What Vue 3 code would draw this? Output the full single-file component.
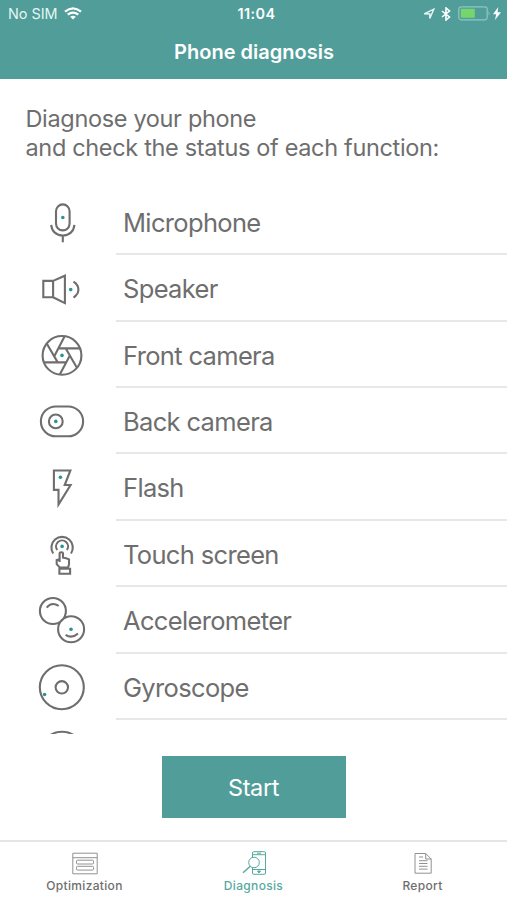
<script setup>
const items = [
  {
    name: 'Microphone',
    paths: ['M56 21.9a6.8 6.8 0 0 1 13.6 0v12.4a6.8 6.8 0 0 1-13.6 0z', 'M51.2 35.6c.5 6.5 5.2 10.6 11.6 10.6S73.9 42.1 74.4 35.6M62.8 46.2v6.8'],
    dot: [62.8, 28.2],
  },
  {
    name: 'Speaker',
    paths: ['M43.3 25.6h9.8v16.3h-9.8zM53.1 25.6l11.8-5.2v27.4l-11.8-5.9', 'M73.5 26.3q4.9 3.2 4.9 8t-4.9 8'],
    dot: [70.7, 34.3],
  },
  {
    name: 'Front camera',
    paths: [
      'M42.6 33.1a19.4 19.4 0 1 0 38.8 0a19.4 19.4 0 1 0-38.8 0',
      'M64.5 14.1L54.3 34M58 26.1h22M65.8 26.1l10.8 18.8M70 32.9l-10.2 19.2M66.3 40.1H44.2M57.7 40.1L46.6 20.9',
    ],
    dot: [62, 33.1],
  },
  {
    name: 'Back camera',
    paths: ['M55.8 18.2h12.4a14.9 14.9 0 0 1 0 29.8H55.8a14.9 14.9 0 0 1 0-29.8z', 'M48.9 33.1a6.9 6.9 0 1 0 13.8 0a6.9 6.9 0 1 0-13.8 0'],
    dot: [55.8, 33.1],
  },
  {
    name: 'Flash',
    paths: ['M53.9 16.2h16.5l-5.7 14.5h5.9L58.5 50.2V35.6h-4.6z'],
    dot: [60.4, 22.9],
  },
  {
    name: 'Touch screen',
    paths: [
      'M53.2 32.2a10.7 10.7 0 1 1 17.8 0M57.2 28.7a6 6 0 1 1 9.7 0',
      'M59.6 40.6V32.3q0-1.4 1.7-1.4t1.7 1.4V36.4l3.2.5 2.8 1.2v5.2l-1 3h-8l-3.3-3.5v-4l2.9-.8',
      'M59.4 47.4h10.7v5.1H59.4z',
    ],
    dot: [62.1, 25.1],
  },
  {
    name: 'Accelerometer',
    paths: [
      'M39.9 23.7a13 13 0 1 0 26 0a13 13 0 1 0-26 0M58.1 41.9a13 13 0 1 0 26 0a13 13 0 1 0-26 0',
      'M46.7 20.3q5-6.2 12-1.7M65.6 47.6q6.4 4 12.4-1.5',
    ],
    dot: [71, 41.9],
  },
  {
    name: 'Gyroscope',
    paths: ['M39.8 33a22 22 0 1 0 44 0a22 22 0 1 0-44 0M55.6 33a6.2 6.2 0 1 0 12.4 0a6.2 6.2 0 1 0-12.4 0'],
    dot: [44.6, 40.2],
  },
]
</script>

<template>
  <div class="screen">
    <header class="top">
      <div class="status">
        <div class="carrier">
          <span>No SIM</span>
          <svg width="18" height="13" viewBox="0 0 18 13" fill="none" stroke="#fff" stroke-width="2.2">
            <path d="M1 4.7q8-6.6 16 0M3.7 7.7q5.3-4.2 10.6 0" />
            <path d="M6.2 9.7q2.8-2 5.6 0L9 12.5z" fill="#fff" stroke="none" />
          </svg>
        </div>
        <div class="clock">11:04</div>
        <div class="indicators">
          <svg class="locate" width="12" height="12" viewBox="0 0 12 12" fill="none" stroke="#e4f6f2" stroke-width="1.4">
            <path d="M1.2 5.8L10.8 1.2 6.8 10.6V6z" />
          </svg>
          <svg class="bluetooth" width="10" height="14" viewBox="0 0 10 14" fill="none" stroke="#fff" stroke-width="1.6">
            <path d="M1 4l7.5 6L5 13V1l3.5 3L1 10" />
          </svg>
          <svg class="battery" width="33" height="15" viewBox="0 0 33 15">
            <rect x=".8" y=".8" width="28.4" height="13" rx="2.5" fill="none" stroke="#91c5c1" stroke-width="1.2" />
            <rect x="2.8" y="2.8" width="14" height="9" rx=".8" fill="#75d66d" />
            <path d="M30.6 5q2 2.3 0 4.6z" fill="#91c5c1" />
          </svg>
          <svg class="charge" width="8" height="13" viewBox="0 0 8 13" fill="#fff">
            <path d="M5.3 0L0 7.3h3.2L2 13l6-7.7H4.5z" />
          </svg>
        </div>
      </div>
      <h1>Phone diagnosis</h1>
    </header>

    <main>
      <p class="intro">
        <span class="line">Diagnose your phone</span>
        <span class="line">and check the status of each function:</span>
      </p>
      <ul class="list">
        <li v-for="item in items" :key="item.name" class="row">
          <svg class="icon" width="116" height="66" viewBox="0 -0.3 116 66">
            <path v-for="d in item.paths" :key="d" :d="d" />
            <circle :cx="item.dot[0]" :cy="item.dot[1]" r="1.8" />
          </svg>
          <div class="label">{{ item.name }}</div>
        </li>
        <li class="partial">
          <svg class="icon" width="116" height="14" viewBox="0 0 116 14">
            <path d="M40 33.7a22 22 0 0 1 44 0" />
          </svg>
        </li>
      </ul>
      <div class="action"><button type="button">Start</button></div>
    </main>

    <nav class="tabs">
      <div class="tab">
        <svg width="26" height="26" viewBox="0 0 26 26" fill="none" stroke="#929292" stroke-width="1">
          <path d="M.8 3.2h24.4v20.6H.8zM.8 7.7h24.4" />
          <rect x="4.5" y="10.2" width="17" height="3.8" rx="1" />
          <rect x="4.5" y="16.3" width="17" height="3.8" rx="1" />
        </svg>
        <span>Optimization</span>
      </div>
      <div class="tab active">
        <svg width="26" height="26" viewBox="0 0 26 26" fill="none" stroke="#57a99f" stroke-width="1">
          <path d="M11.5 7.3V3q0-1.3 1.3-1.3h10.4q1.3 0 1.3 1.3v20q0 1.3-1.3 1.3H12.8q-1.3 0-1.3-1.3v-5.3M11.5 4.7h13M11.5 19.5h13M16 3.2h4" />
          <circle cx="13" cy="12.5" r="5.3" />
          <path d="M9.3 16.2L2 22.7" stroke-width="1.5" />
          <path d="M16.5 21h3L18 23z" fill="#57a99f" />
        </svg>
        <span>Diagnosis</span>
      </div>
      <div class="tab">
        <svg width="26" height="26" viewBox="0 0 26 26" fill="none" stroke="#929292" stroke-width="1">
          <path d="M5 3.5h10.7l5.5 5.5v14.2H5zM15.7 3.5V9h5.5" />
          <path d="M9 7h4M9 10.7h8.5M9 13.5h8.5M9 16.3h8.5M9 19.1h8.5" />
        </svg>
        <span>Report</span>
      </div>
    </nav>
  </div>
</template>

<style>
body {
  margin: 0;
  background: #fff;
}
</style>

<style scoped>
.screen {
  display: flex;
  flex-direction: column;
  width: 507px;
  height: 900px;
  overflow: hidden;
  background: #fff;
  color: #6e6e6e;
  font-family: Inter, "Liberation Sans", sans-serif;
}
.top {
  height: 79px;
  background: #519d9a;
  color: #fff;
}
.status {
  display: grid;
  grid-template-columns: 1fr auto 1fr;
  align-items: center;
  height: 27px;
  padding: 0 6px 0 8px;
}
.carrier {
  display: flex;
  align-items: center;
  gap: 6px;
  font-size: 14.4px;
  color: #e4f6f2;
}
.clock {
  padding-left: 4px;
  font-size: 14.4px;
  font-weight: 600;
  letter-spacing: 0.4px;
}
.indicators {
  display: flex;
  align-items: center;
  justify-content: flex-end;
}
.bluetooth {
  margin-left: 6px;
}
.battery {
  margin-left: 7px;
}
.charge {
  margin-left: 2px;
}
h1 {
  margin: 0;
  padding-left: 1px;
  font-size: 20px;
  font-weight: 600;
  line-height: 51px;
  text-align: center;
}
main {
  flex: 1;
}
.intro {
  height: 84.8px;
  margin: 0;
  padding: 25px 0 0 25.5px;
  box-sizing: content-box;
  font-size: 23.5px;
  line-height: 29px;
  letter-spacing: -0.34px;
}
.line {
  display: block;
}
.list {
  height: 545.4px;
  margin: 0;
  padding: 0;
  list-style: none;
}
.row {
  display: flex;
  height: 66.4px;
}
.icon {
  display: block;
  flex: none;
  fill: none;
  stroke: #6e6e6e;
  stroke-width: 2.1;
}
.icon circle {
  fill: #299590;
  stroke: none;
}
.label {
  flex: 1;
  box-sizing: border-box;
  padding-left: 7px;
  border-bottom: 2px solid #e7e7e7;
  font-size: 25.5px;
  line-height: 67px;
  letter-spacing: -0.66px;
}
.partial {
  height: 14px;
}
.action {
  display: flex;
  justify-content: center;
  padding-top: 22px;
}
button {
  width: 184px;
  height: 62px;
  padding: 1px 0 0;
  border: 0;
  background: #519d9a;
  color: #fff;
  font: 400 23.5px Inter, sans-serif;
  letter-spacing: -0.4px;
}
.tabs {
  display: grid;
  grid-template-columns: 1fr 1fr 1fr;
  height: 60px;
  box-sizing: border-box;
  border-top: 2px solid #e5e5e5;
}
.tab {
  display: flex;
  flex-direction: column;
  align-items: center;
  padding-top: 8px;
  font-size: 12px;
  font-weight: 500;
  line-height: 20px;
  letter-spacing: 0.33px;
}
.active {
  color: #57a99f;
}
</style>
